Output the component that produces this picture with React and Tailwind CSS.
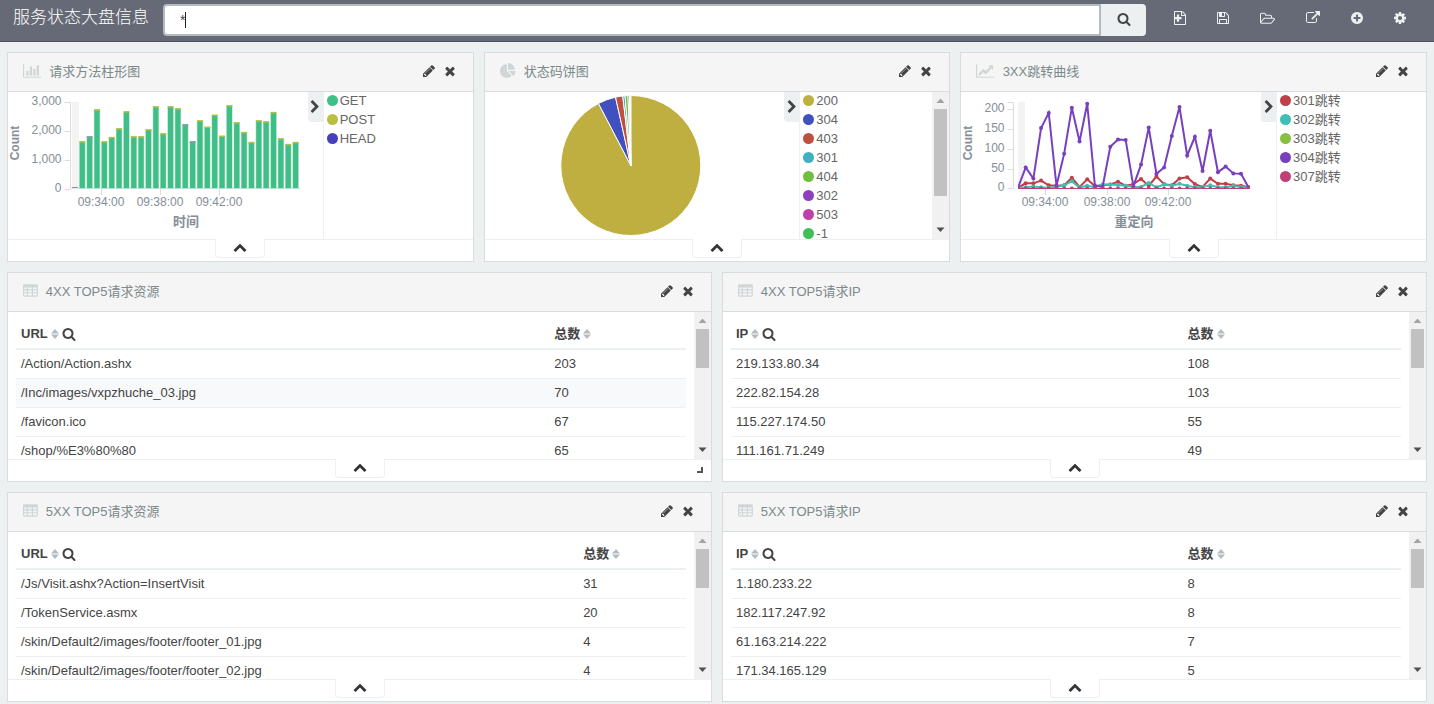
import { useState } from "react";

// [viewBox, outline, optional shape laid over it]
const ICONS = {
  search: [
    "0 0 1792 1792",
    "M1216 832q0-185-131.5-316.5t-316.5-131.5-316.5 131.5-131.5 316.5 131.5 316.5 316.5 131.5 316.5-131.5 131.5-316.5zm512 832q0 52-38 90t-90 38q-54 0-90-38l-343-342q-179 124-399 124-143 0-273.5-55.5t-225-150-150-225-55.5-273.5 55.5-273.5 150-225 225-150 273.5-55.5 273.5 55.5 225 150 150 225 55.5 273.5q0 220-124 399l343 343q37 37 37 90z",
  ],
  pencil: [
    "0 0 1792 1792",
    "M491 1536l91-91-235-235-91 91v107h128v128h107zm523-928q0-22-22-22-10 0-17 7l-542 542q-7 7-7 17 0 22 22 22 10 0 17-7l542-542q7-7 7-17zm-54-192l416 416-832 832h-416v-416zm683 96q0 53-37 90l-166 166-416-416 166-165q36-38 90-38 53 0 91 38l235 234q37 39 37 91z",
  ],
  close: [
    "0 0 1792 1792",
    "M1490 1322q0 40-28 68l-136 136q-28 28-68 28t-68-28l-294-294-294 294q-28 28-68 28t-68-28l-136-136q-28-28-28-68t28-68l294-294-294-294q-28-28-28-68t28-68l136-136q28-28 68-28t68 28l294 294 294-294q28-28 68-28t68 28l136 136q28 28 28 68t-28 68l-294 294 294 294q28 28 28 68z",
  ],
  up: [
    "0 0 1792 1792",
    "M1683 1331l-166 165q-19 19-45 19t-45-19l-531-531-531 531q-19 19-45 19t-45-19l-166-165q-19-19-19-45.5t19-45.5l742-741q19-19 45-19t45 19l742 741q19 19 19 45.5t-19 45.5z",
  ],
  right: [
    "0 0 1792 1792",
    "M1363 877l-742 742q-19 19-45 19t-45-19l-166-166q-19-19-19-45t19-45l531-531-531-531q-19-19-19-45t19-45l166-166q19-19 45-19t45 19l742 742q19 19 19 45t-19 45z",
  ],
  file: [
    "128 0 1536 1792",
    "M1596 380q28 28 48 76t20 88v1152q0 40-28 68t-68 28h-1344q-40 0-68-28t-28-68v-1600q0-40 28-68t68-28h896q40 0 88 20t76 48zm-444-244v376h376q-10-29-22-41l-313-313q-12-12-41-22zm384 1528v-1024h-416q-40 0-68-28t-28-68v-416h-768v1536h1280z",
    "M500 440h280v320h320v280H780v320H500v-320H128V760h372z",
  ],
  save: [
    "128 0 1536 1792",
    "M512 1536h768v-384h-768v384zm896 0h128v-896q0-14-10-38.5t-20-34.5l-281-281q-10-10-34-20t-39-10v416q0 40-28 68t-68 28h-576q-40 0-68-28t-28-68v-416h-128v1280h128v-416q0-40 28-68t68-28h832q40 0 68 28t28 68v416zm-384-928v-320q0-13-9.5-22.5t-22.5-9.5h-192q-13 0-22.5 9.5t-9.5 22.5v320q0 13 9.5 22.5t22.5 9.5h192q13 0 22.5-9.5t9.5-22.5zm640 32v928q0 40-28 68t-68 28h-1344q-40 0-68-28t-28-68v-1344q0-40 28-68t68-28h928q40 0 88 20t76 48l280 280q28 28 48 76t20 88z",
  ],
  open: [
    "0 0 1920 1792",
    "M1781 1027q0-35-53-35h-1088q-40 0-85.5 21.5t-71.5 52.5l-294 363q-18 24-18 40 0 35 53 35h1088q40 0 86-22t71-53l294-363q18-22 18-39zm-1141-163h768v-160q0-40-28-68t-68-28h-576q-40 0-68-28t-28-68v-64q0-40-28-68t-68-28h-320q-40 0-68 28t-28 68v853l256-315q44-53 116-87.5t140-34.5zm1269 163q0 62-46 120l-295 363q-43 53-116 87.5t-140 34.5h-1088q-92 0-158-66t-66-158v-960q0-92 66-158t158-66h320q92 0 158 66t66 158v32h544q92 0 158 66t66 158v160h192q54 0 99 24.5t67 70.5q15 32 15 68z",
  ],
  share: [
    "0 0 1792 1792",
    "M1408 928v320q0 119-84.5 203.5t-203.5 84.5h-832q-119 0-203.5-84.5t-84.5-203.5v-832q0-119 84.5-203.5t203.5-84.5h704q14 0 23 9t9 23v64q0 14-9 23t-23 9h-704q-66 0-113 47t-47 113v832q0 66 47 113t113 47h832q66 0 113-47t47-113v-320q0-14 9-23t23-9h64q14 0 23 9t9 23zm384-864v512q0 26-19 45t-45 19-45-19l-176-176-652 652q-10 10-23 10t-23-10l-114-114q-10-10-10-23t10-23l652-652-176-176q-19-19-19-45t19-45 45-19h512q26 0 45 19t19 45z",
  ],
  plus: [
    "128 0 1536 1792",
    "M1344 960v-128q0-26-19-45t-45-19h-256v-256q0-26-19-45t-45-19h-128q-26 0-45 19t-19 45v256h-256q-26 0-45 19t-19 45v128q0 26 19 45t45 19h256v256q0 26 19 45t45 19h128q26 0 45-19t19-45v-256h256q26 0 45-19t19-45zm320-64q0 209-103 385.5t-279.5 279.5-385.5 103-385.5-103-279.5-279.5-103-385.5 103-385.5 279.5-279.5 385.5-103 385.5 103 279.5 279.5 103 385.5z",
  ],
  cog: [
    "128 0 1536 1792",
    "M1152 896q0-106-75-181t-181-75-181 75-75 181 75 181 181 75 181-75 75-181zm512-109v222q0 12-8 23t-20 13l-185 28q-19 54-39 91 35 50 107 138 10 12 10 25t-9 23q-27 37-99 108t-94 71q-12 0-26-9l-138-108q-44 23-91 38-16 136-29 186-7 28-36 28h-222q-14 0-24.5-8.5t-11.5-21.5l-28-184q-49-16-90-37l-141 107q-10 9-25 9-14 0-25-11-126-114-165-168-7-10-7-23 0-12 8-23 15-21 51-66.5t54-70.5q-27-50-41-99l-183-27q-13-2-21-12.5t-8-23.5v-222q0-12 8-23t19-13l186-28q14-46 39-92-40-57-107-138-10-12-10-24 0-10 9-23 26-36 98.5-107.5t94.5-71.5q13 0 26 10l138 107q44-23 91-38 16-136 29-186 7-28 36-28h222q14 0 24.5 8.5t11.5 21.5l28 184q49 16 90 37l142-107q9-9 24-9 13 0 25 10 129 119 165 170 7 8 7 22 0 12-8 23-15 21-51 66.5t-54 70.5q26 50 41 98l183 28q13 2 21 12.5t8 23.5z",
  ],
  bar: [
    "0 0 2048 1792",
    "M640 896v512h-256v-512h256zm384-512v1024h-256v-1024h256zm1024 1152v128h-2048v-1536h128v1408h1920zm-640-896v768h-256v-768h256zm384-384v1152h-256v-1152h256z",
  ],
  line: [
    "0 0 2048 1792",
    "M2048 1536v128h-2048v-1536h128v1408h1920zm-128-1248v435q0 21-19.5 29.5t-35.5-7.5l-121-121-633 633q-10 10-23 10t-23-10l-233-233-416 416-192-192 585-585q10-10 23-10t23 10l233 233 464-464-121-121q-16-16-7.5-35.5t29.5-19.5h435q14 0 23 9t9 23z",
  ],
  pie: [
    "0 0 1792 1792",
    "M768 890l546 546q-106 108-247.5 168t-298.5 60q-209 0-385.5-103t-279.5-279.5-103-385.5 103-385.5 279.5-279.5 385.5-103v762zm187 6h773q0 157-60 298.5t-168 247.5zm709-128h-768v-768q209 0 385.5 103t279.5 279.5 103 385.5z",
  ],
  table: [
    "0 0 1664 1792",
    "M160 128h1344q66 0 113 47t47 113v1088q0 66-47 113t-113 47H160q-66 0-113-47T0 1376V288q0-66 47-113t113-47zM128 512v192h288V512zM544 512v192h448V512zM1120 512v192h416V512zM128 832v192h288V832zM544 832v192h448V832zM1120 832v192h416V832zM128 1152v256h288v-256zM544 1152v256h448v-256zM1120 1152v256h416v-256z",
  ],
};

function Icon({ name, className = "h-3.5" }) {
  const [box, d, over] = ICONS[name];
  return (
    <svg viewBox={box} className={["w-auto shrink-0 fill-current", className].join(" ")} aria-hidden="true">
      <path fillRule="evenodd" d={d} />
      {over && <path d={over} />}
    </svg>
  );
}

const NAV_BUTTONS = [
  ["file", "New"],
  ["save", "Save"],
  ["open", "Load"],
  ["share", "Share"],
  ["plus", "Add"],
  ["cog", "Options"],
];

function NavBar() {
  const [query, setQuery] = useState("*");

  return (
    <nav className="flex items-start border-b border-[#4c505c] bg-[#656a76] pt-1 pr-7 pb-[5px] pl-[13px] text-white">
      <h1 className="shrink-0 text-[17px] leading-7 font-light">服务状态大盘信息</h1>
      <form className="relative mr-7 ml-3.5 flex h-8 flex-1" onSubmit={(e) => e.preventDefault()}>
        <input
          aria-label="Search"
          value={query}
          onChange={(e) => setQuery(e.target.value)}
          className="min-w-0 flex-1 rounded-l border-2 border-[#b3bac2] bg-white px-[15px] text-[14px] text-[#444] outline-none"
        />
        {/* caret */}
        <span className="pointer-events-none absolute top-2 left-[22px] h-4 w-px bg-[#222]" />
        <button
          aria-label="Run search"
          className="flex w-[45px] items-center justify-center rounded-r bg-[#ecf0f1] pb-0.5 text-[#444]"
        >
          <Icon name="search" />
        </button>
      </form>
      <div className="flex h-7 items-center gap-[31px] text-[#ecf0f1]">
        {NAV_BUTTONS.map(([icon, label]) => (
          <button key={icon} aria-label={label}>
            <Icon name={icon} />
          </button>
        ))}
      </div>
    </nav>
  );
}

function Panel({ icon, title, resizable = false, children }) {
  return (
    <section className="min-w-0 flex-1 border border-[#d9dcdd] bg-white">
      <header className="flex h-[39px] items-center justify-between border-b border-[#d9dcdd] bg-[#f5f5f5] pr-4 pl-[15px]">
        <div className="flex items-center gap-2">
          <span className="pb-0.5 text-[#d0d6d6]">
            <Icon name={icon} className="h-4" />
          </span>
          <h2 className="text-[13px] leading-5 text-[#7b8a8b]">{title}</h2>
        </div>
        <div className="flex gap-[7px] pb-0.5 text-[#444]">
          <button aria-label="Edit">
            <Icon name="pencil" />
          </button>
          <button aria-label="Remove">
            <Icon name="close" />
          </button>
        </div>
      </header>
      <div className="flex h-[147px] overflow-hidden">{children}</div>
      <footer className="relative flex h-[22px] justify-center border-t border-[#ecf0f1]">
        <button
          aria-label="Toggle table"
          className="-mt-px flex h-[19px] w-[50px] items-center justify-center rounded-b border border-t-0 border-[#ecf0f1] bg-white pb-0.5 text-[#333]"
        >
          <Icon name="up" />
        </button>
        {resizable && (
          <span className="absolute right-2 bottom-2 h-1.5 w-1.5 border-r-2 border-b-2 border-[#555]" />
        )}
      </footer>
    </section>
  );
}

function ScrollBar({ long = false }) {
  return (
    <div className="flex w-[17px] shrink-0 flex-col items-center bg-[#f1f1f1]" aria-hidden="true">
      <svg className="h-[17px] w-[17px] shrink-0" viewBox="0 0 17 17">
        <path d="M4.500 11h8l-4-4.500z" fill="#a3a3a3" />
      </svg>
      <div className={["w-[13px] bg-[#c1c1c1]", long ? "h-[87px]" : "h-[39px]"].join(" ")} />
      <svg className="mt-auto h-[17px] w-[17px] shrink-0" viewBox="0 0 17 17">
        <path d="M4.500 5.500h8l-4 4.500z" fill="#505050" />
      </svg>
    </div>
  );
}

function Vis({ legend, scroll = false, children }) {
  return (
    <>
      <div className="min-w-0 flex-1">{children}</div>
      <button
        aria-label="Toggle legend"
        className="flex h-[30px] w-[15px] shrink-0 items-center justify-center rounded-bl bg-[#ecf0f1] text-[#444]"
      >
        <Icon name="right" />
      </button>
      <div className="flex w-[150px] shrink-0 border-l border-[#ecf0f1]">
        <ul className="flex-1 pl-[3px]">
          {legend.map(([label, color]) => (
            <li key={label} className="flex h-[19px] items-center gap-0.5 pb-0.5 text-[13px] leading-4 text-[#666]">
              <span className="h-[11px] w-[11px] rounded-full" style={{ background: color }} />
              {label}
            </li>
          ))}
        </ul>
        {scroll && <ScrollBar long />}
      </div>
    </>
  );
}

// shared axes; y ticks are [label, y], x ticks are [label, x]
function Axes({ left, yTicks, xTicks, title, titleX }) {
  return (
    <g fill="#848e96" fontSize="12">
      <path d={`M${left - 6} 10.500H${left}V97`} fill="none" stroke="#ddd" />
      {yTicks.map(([label, y]) => (
        <g key={label}>
          <path d={`M${left - 6} ${y}h6`} stroke="#ddd" />
          <text x={left - 9} y={Math.floor(y) + 3} textAnchor="end">
            {label}
          </text>
        </g>
      ))}
      {xTicks.map(([label, x]) => (
        <g key={label}>
          <path d={`M${x} 97v6`} stroke="#ddd" />
          <text x={x - 0.5} y="114" textAnchor="middle">
            {label}
          </text>
        </g>
      ))}
      <text x={titleX} y="134" textAnchor="middle" fontSize="13" fontWeight="bold">
        {title}
      </text>
      <text transform="translate(11 51) rotate(-90)" textAnchor="middle" fontWeight="bold">
        Count
      </text>
    </g>
  );
}

const REQUESTS = [
  1598, 1770, 2700, 1598, 1747, 2046, 2632, 1770, 1770, 2011, 2805, 1874, 2805, 2736, 2184, 1598, 2322, 2103, 2517,
  1793, 2839, 2253, 1920, 1575, 2322, 2287, 2609, 1701, 1506, 1575,
];
const HEAD_ON_TOP = [1, 14, 15];

function BarChart() {
  return (
    <svg className="h-full w-full" role="img" aria-label="请求方法柱形图">
      <rect x="64" y="10" width="7" height="87" fill="#f3f3f3" />
      <Axes
        left={62.5}
        yTicks={[
          ["3,000", 10.5],
          ["2,000", 39.5],
          ["1,000", 68.5],
          ["0", 97.5],
        ]}
        xTicks={[
          ["09:34:00", 93.5],
          ["09:38:00", 152.5],
          ["09:42:00", 211.5],
        ]}
        title="时间"
        titleX={178}
      />
      <rect x="64" y="95" width="6" height="1" fill="#3fbf87" />
      <path d="M63 96.500H292" stroke="#d9e8e0" />
      {REQUESTS.map((v, i) => {
        const h = v * 0.029;
        const x = 71.3 + i * 7.355;
        return (
          <g key={i}>
            <rect x={x - 0.2} y={96 - h} width="6.4" height={h + 1} fill="#b5e3ce" />
            <rect x={x + 0.4} y={96 - h} width="5.2" height={h} fill="#3fbf87" />
            <rect x={x} y={95.5 - h} width="6" height="1.5" fill={HEAD_ON_TOP.includes(i) ? "#8f97a3" : "#b9bf3f"} />
          </g>
        );
      })}
    </svg>
  );
}

// share of the circle in degrees, clockwise from the top
const SLICES = [
  [332.5, "#bfaf40"],
  [14.9, "#4050bf"],
  [6, "#bf5040"],
  [1.9, "#40afbf"],
  [2.4, "#70bf40"],
  [1.2, "#8f40bf"],
  [0.6, "#bf40a7"],
  [0.5, "#40bf58"],
];

function PieChart() {
  const cx = 145.8;
  const cy = 73.5;
  const r = 70;
  const at = (deg) => {
    const a = (deg * Math.PI) / 180;
    return `${cx + r * Math.sin(a)} ${cy - r * Math.cos(a)}`;
  };
  let start = 0;

  return (
    <svg className="h-full w-full" role="img" aria-label="状态码饼图">
      {SLICES.map(([deg, color]) => {
        const from = start;
        start += deg;
        return (
          <path
            key={color}
            d={`M${cx} ${cy}L${at(from)}A${r} ${r} 0 ${deg > 180 ? 1 : 0} 1 ${at(start)}Z`}
            fill={color}
            stroke="#fff"
          />
        );
      })}
    </svg>
  );
}

const SERIES = [
  {
    color: "#bf3f48",
    values: [
      2, 13, 13, 20, 8, 7, 8, 27, 4, 23, 6, 8, 10, 17, 7, 11, 24, 7, 30, 11, 8, 25, 28, 11, 4, 25, 12, 12, 8, 7, 3,
    ],
  },
  {
    color: "#3fbfb5",
    values: [2, 3, 5, 3, 2, 4, 8, 18, 3, 7, 3, 10, 10, 9, 7, 4, 4, 14, 3, 10, 7, 12, 7, 3, 4, 8, 3, 3, 6, 4, 2],
  },
  {
    color: "#783fbf",
    values: [
      2, 53, 25, 152, 190, 7, 87, 203, 118, 213, 7, 4, 105, 123, 122, 6, 60, 153, 37, 53, 132, 205, 83, 130, 44, 145,
      41, 55, 38, 37, 2,
    ],
  },
  { color: "#bf3f76", values: Array(31).fill(0) },
];

function LineChart() {
  const px = (i) => 57 + i * 7.69;
  const py = (v) => 96.5 - v * 0.398;

  return (
    <svg className="h-full w-full" role="img" aria-label="3XX跳转曲线">
      <rect x="57" y="10" width="7" height="87" fill="#f3f3f3" />
      <Axes
        left={52.5}
        yTicks={[
          ["200", 17.5],
          ["150", 37.5],
          ["100", 57.5],
          ["50", 77.5],
          ["0", 96.5],
        ]}
        xTicks={[
          ["09:34:00", 84.5],
          ["09:38:00", 146.5],
          ["09:42:00", 207.5],
        ]}
        title="重定向"
        titleX={173}
      />
      <svg x="57" y="0" width="232" height="97">
        <g transform="translate(-57 0)">
          {SERIES.map((s) => (
            <g key={s.color} fill={s.color}>
              <polyline
                points={s.values.map((v, i) => `${px(i)},${py(v)}`).join(" ")}
                fill="none"
                stroke={s.color}
                strokeWidth={s.values[1] ? 2 : 1}
              />
              {s.values.map((v, i) => (
                <circle key={i} cx={px(i)} cy={py(v)} r="2" />
              ))}
            </g>
          ))}
        </g>
      </svg>
    </svg>
  );
}

function SortButton() {
  return (
    <button aria-label="Sort" className="text-[#b4bcc2]">
      <svg viewBox="0 0 8 10" className="h-2.5 w-2 fill-current">
        <path d="M0 4.500L4 0l4 4.500zM0 5.500h8L4 10z" />
      </svg>
    </button>
  );
}

function DataTable({ field, firstCol, rows, active = -1 }) {
  return (
    <>
      <div className="min-w-0 flex-1 p-2">
        <table className="w-full table-fixed border-separate border-spacing-0 text-left text-[13px] leading-[18px] text-[#444]">
          <colgroup>
            <col style={{ width: firstCol }} />
            <col />
          </colgroup>
          <thead>
            <tr>
              <th className="border-b-2 border-[#ecf0f1] p-[5px]">
                <div className="flex items-center gap-[3px]">
                  {field}
                  <SortButton />
                  <button aria-label="Filter">
                    <Icon name="search" />
                  </button>
                </div>
              </th>
              <th className="border-b-2 border-[#ecf0f1] p-[5px]">
                <div className="flex items-center gap-[3px]">
                  总数
                  <SortButton />
                </div>
              </th>
            </tr>
          </thead>
          <tbody>
            {rows.map(([key, count], i) => (
              <tr key={key} className={i === active ? "bg-[#f8f9fb]" : ""}>
                <td className="truncate border-b border-[#ecf0f1] p-[5px]">{key}</td>
                <td className="border-b border-[#ecf0f1] p-[5px]">{count}</td>
              </tr>
            ))}
          </tbody>
        </table>
      </div>
      <ScrollBar />
    </>
  );
}

const METHODS = [
  ["GET", "#3fbf87"],
  ["POST", "#b9bf3f"],
  ["HEAD", "#483fbf"],
];
const STATUS_CODES = [
  ["200", "#bfaf40"],
  ["304", "#4050bf"],
  ["403", "#bf5040"],
  ["301", "#40afbf"],
  ["404", "#70bf40"],
  ["302", "#8f40bf"],
  ["503", "#bf40a7"],
  ["-1", "#40bf58"],
];
const REDIRECTS = [
  ["301跳转", "#bf3f48"],
  ["302跳转", "#3fbfb5"],
  ["303跳转", "#87bf3f"],
  ["304跳转", "#783fbf"],
  ["307跳转", "#bf3f76"],
];

export default function App() {
  return (
    <div className="min-h-screen bg-[#ecf0f1] font-['Liberation_Sans','Noto_Sans_CJK_SC',sans-serif]">
      <NavBar />
      <main className="flex flex-col gap-2.5 px-[7px] pt-2.5">
        <div className="flex gap-2.5">
          <Panel icon="bar" title="请求方法柱形图">
            <Vis legend={METHODS}>
              <BarChart />
            </Vis>
          </Panel>
          <Panel icon="pie" title="状态码饼图">
            <Vis legend={STATUS_CODES} scroll>
              <PieChart />
            </Vis>
          </Panel>
          <Panel icon="line" title="3XX跳转曲线">
            <Vis legend={REDIRECTS}>
              <LineChart />
            </Vis>
          </Panel>
        </div>
        <div className="flex gap-2.5">
          <Panel icon="table" title="4XX TOP5请求资源" resizable>
            <DataTable
              field="URL"
              firstCol="79.6%"
              active={1}
              rows={[
                ["/Action/Action.ashx", 203],
                ["/Inc/images/vxpzhuche_03.jpg", 70],
                ["/favicon.ico", 67],
                ["/shop/%E3%80%80", 65],
              ]}
            />
          </Panel>
          <Panel icon="table" title="4XX TOP5请求IP">
            <DataTable
              field="IP"
              firstCol="67.4%"
              rows={[
                ["219.133.80.34", 108],
                ["222.82.154.28", 103],
                ["115.227.174.50", 55],
                ["111.161.71.249", 49],
              ]}
            />
          </Panel>
        </div>
        <div className="flex gap-2.5">
          <Panel icon="table" title="5XX TOP5请求资源">
            <DataTable
              field="URL"
              firstCol="83.9%"
              rows={[
                ["/Js/Visit.ashx?Action=InsertVisit", 31],
                ["/TokenService.asmx", 20],
                ["/skin/Default2/images/footer/footer_01.jpg", 4],
                ["/skin/Default2/images/footer/footer_02.jpg", 4],
              ]}
            />
          </Panel>
          <Panel icon="table" title="5XX TOP5请求IP">
            <DataTable
              field="IP"
              firstCol="67.4%"
              rows={[
                ["1.180.233.22", 8],
                ["182.117.247.92", 8],
                ["61.163.214.222", 7],
                ["171.34.165.129", 5],
              ]}
            />
          </Panel>
        </div>
      </main>
    </div>
  );
}
